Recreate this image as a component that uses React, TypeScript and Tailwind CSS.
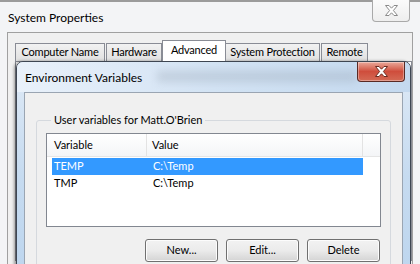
import React from 'react';

const font = { fontFamily: 'Lato, "Noto Sans", sans-serif' };

const tabs = [
    { label: 'Computer Name', w: 'w-[90px]' },
    { label: 'Hardware', w: 'w-[56px]' },
    { label: 'Advanced', w: 'w-[64px]', active: true },
    { label: 'System Protection', w: 'w-[95px]' },
    { label: 'Remote', w: 'w-[47px]' },
];

const rows = [
    { name: 'TEMP', value: 'C:\\Temp', selected: true },
    { name: 'TMP', value: 'C:\\Temp' },
];

const CloseGlyph: React.FC<{ fill: string; stroke: string }> = ({ fill, stroke }) => (
    <svg width="15" height="11" viewBox="0 0 15 11">
        <path
            d="M1.5 0.5 H5 L7.5 3.2 L10 0.5 H13.5 L9.4 5.5 L13.5 10.5 H10 L7.5 7.8 L5 10.5 H1.5 L5.6 5.5 Z"
            fill={fill}
            stroke={stroke}
            strokeWidth="1"
            strokeLinejoin="round"
        />
    </svg>
);

const Button: React.FC<{ label: string }> = ({ label }) => (
    <div className="w-[73px] h-[23px] rounded-[3px] border border-[#707070] bg-gradient-to-b from-[#f2f2f2] via-[#ebebeb] to-[#d4d4d4] shadow-[inset_0_0_0_1px_#fcfcfc] flex items-center justify-center text-[11px] text-black">
        {label}
    </div>
);

const EnvironmentVariables: React.FC = () => (
    <div className="absolute left-[16px] top-[61px] w-[395px] h-[230px] rounded-t-[7px] border border-[#3e4652] bg-gradient-to-b from-[#dfeaf6] via-[#c6dbf0] to-[#bcd5ee] shadow-[-2px_0_3px_rgba(0,0,0,0.35)] flex flex-col">
        {/* Title bar */}
        <div className="relative h-[30px] flex items-start rounded-t-[6px] bg-gradient-to-r from-[#e9f1fa] via-[#d3e3f4] to-[#c4d9ef]">
            <div className="absolute left-[140px] top-[9px] w-[200px] h-[11px] bg-[#8e9aa8] opacity-30 blur-[4px]" />
            <span className="relative self-center pl-[8px] pt-[1px] text-[12px] text-black">Environment Variables</span>
            <div className="relative ml-auto mr-[5px] w-[48px] h-[20px] rounded-b-[4px] border border-t-0 border-[#5a2a24] bg-gradient-to-b from-[#e9a89a] via-[#cf4d3c] to-[#d46a55] shadow-[inset_0_0_0_1px_rgba(255,255,255,0.35)] flex items-center justify-center">
                <CloseGlyph fill="#ffffff" stroke="#6b2b20" />
            </div>
        </div>

        {/* Client area */}
        <div className="mx-[7px] flex-1 border border-[#9aa5b2] bg-[#f0f0f0] px-[11px]">
            <fieldset className="mt-[19px] border border-[#d5d9de] rounded-[3px] px-[9px] pb-[10px]">
                <legend className="ml-[5px] px-[3px] text-[11px] leading-[16px] text-black">User variables for Matt.O'Brien</legend>

                {/* List */}
                <div className="mt-[5px] h-[94px] border border-[#828790] bg-white">
                    <div className="flex h-[23px] border-b border-[#e5e5e5] bg-gradient-to-b from-white to-[#f4f5f7] text-[11px] text-black">
                        <div className="w-[100px] pl-[7px] flex items-center border-r border-[#e3e3e3]">Variable</div>
                        <div className="w-[216px] pl-[5px] flex items-center border-r border-[#e3e3e3]">Value</div>
                    </div>
                    <div className="mt-[1px] ml-[5px] w-[311px] flex flex-col">
                        {rows.map((r) => (
                            <div
                                key={r.name}
                                className={`flex h-[17px] items-center text-[11px] ${r.selected ? 'bg-[#3399ff] text-white' : 'text-black'}`}
                            >
                                <div className="w-[95px] pl-[2px]">{r.name}</div>
                                <div className="pl-[6px]">{r.value}</div>
                            </div>
                        ))}
                    </div>
                </div>

                {/* Buttons */}
                <div className="mt-[12px] flex justify-end gap-[8px] pr-[1px]">
                    <Button label="New..." />
                    <Button label="Edit..." />
                    <Button label="Delete" />
                </div>
            </fieldset>
        </div>
    </div>
);

const App: React.FC = () => {
    return (
        <div className="relative w-[420px] h-[264px] overflow-hidden bg-[#f3f4f6]" style={font}>
            <div className="flex flex-col h-full border-t-2 border-[#9b9b9b]">
                {/* System Properties title bar */}
                <div className="h-[30px] flex items-start">
                    <span className="self-center pl-[8px] pt-[2px] text-[12px] text-black">System Properties</span>
                    <div className="ml-auto mr-[10px] mt-[-2px] w-[38px] h-[22px] rounded-b-[4px] border border-t-0 border-[#a9a9a9] bg-gradient-to-b from-[#fbfbfb] to-[#eeeeee] flex items-center justify-center">
                        <CloseGlyph fill="#ffffff" stroke="#8a8a8a" />
                    </div>
                </div>

                {/* Client area */}
                <div className="mx-[7px] flex-1 border border-b-0 border-[#a0a0a0] bg-[#f0f0f0] pl-[7px] pt-[7px]">
                    <div className="flex items-end h-[21px]">
                        {tabs.map((t) => (
                            <div
                                key={t.label}
                                className={
                                    t.active
                                        ? `${t.w} h-[21px] pb-[1px] border border-b-0 border-[#898c95] bg-white flex items-center justify-center text-[11px] tracking-[-0.2px] text-black -mx-[1px] relative z-10`
                                        : `${t.w} h-[18px] mr-[1px] border border-b-0 border-[#898c95] bg-gradient-to-b from-[#f2f2f2] to-[#e0e0e0] flex items-center justify-center text-[11px] tracking-[-0.2px] text-black`
                                }
                            >
                                {t.label}
                            </div>
                        ))}
                    </div>
                    <div className="h-[200px] border border-[#898c95] bg-white" />
                </div>
            </div>

            <EnvironmentVariables />
        </div>
    );
};

export default App;
